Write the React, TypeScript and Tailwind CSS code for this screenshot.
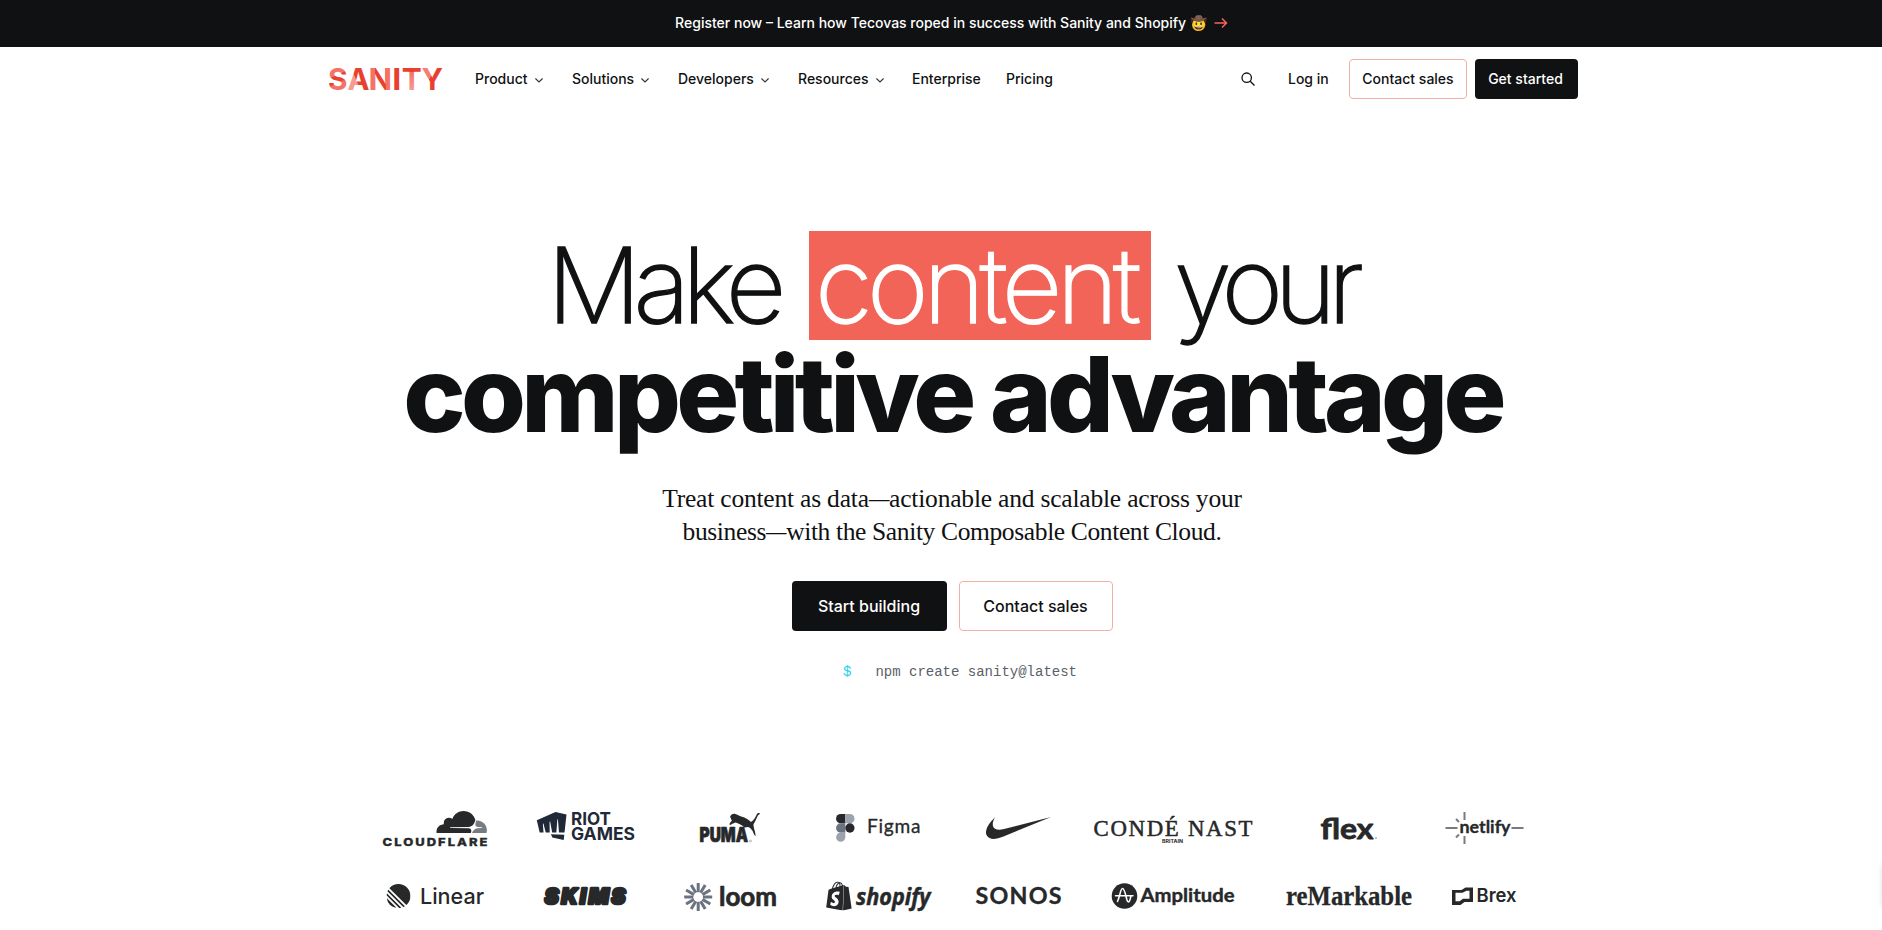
import React from "react";
import { SiShopify, SiLinear } from "react-icons/si";

const INK = "#26282a";

type WordProps = {
  x: number;
  y: number;
  size: number;
  width: number;
  weight?: number;
  font?: string;
  italic?: boolean;
  fill?: string;
  stroke?: number;
  /** Horizontal glyph scale; the rest of the width is made up by letter spacing. */
  sx?: number;
  children: string;
};

function Word({ x, y, size, width, weight = 700, font = "Inter", italic, fill = INK, stroke, sx, children }: WordProps) {
  return (
    <text
      transform={`translate(${x} ${y}) scale(${sx ?? 1} 1)`}
      fontSize={size}
      fontWeight={weight}
      fontFamily={`"${font}", sans-serif`}
      fontStyle={italic ? "italic" : "normal"}
      textLength={width / (sx ?? 1)}
      lengthAdjust={sx ? "spacing" : "spacingAndGlyphs"}
      fill={fill}
      stroke={stroke ? fill : undefined}
      strokeWidth={stroke}
      strokeLinejoin="round"
    >
      {children}
    </text>
  );
}

function Logo({ w, label, children }: { w: number; label: string; children: React.ReactNode }) {
  return (
    <div className="flex h-[69px] items-center justify-center">
      <svg width={w} height={46} viewBox={`0 0 ${w} 46`} className="shrink-0 overflow-visible" role="img" aria-label={label}>
        {children}
      </svg>
    </div>
  );
}

const sanityLetters = [
  { ch: "S", x: -1, w: 19.5, fill: "url(#sS)" },
  { ch: "A", x: 18.5, w: 22, fill: "url(#sA)" },
  { ch: "N", x: 39.6, w: 23.6, fill: "url(#sN)" },
  { ch: "I", x: 63.3, w: 9, fill: "#e8402f" },
  { ch: "T", x: 72.8, w: 20, fill: "url(#sT)" },
  { ch: "Y", x: 92.5, w: 21.5, fill: "url(#sY)" },
];

function SanityLogo() {
  return (
    <svg width="114" height="24" viewBox="0 0 114 24" className="shrink-0 overflow-visible" role="img" aria-label="Sanity">
      <defs>
        <linearGradient id="sS" gradientUnits="userSpaceOnUse" x1="3" y1="1" x2="13" y2="23">
          <stop offset="0.34" stopColor="#f37368" />
          <stop offset="0.36" stopColor="#e8402f" />
          <stop offset="0.62" stopColor="#e8402f" />
          <stop offset="0.7" stopColor="#f37368" />
        </linearGradient>
        <linearGradient id="sA" gradientUnits="userSpaceOnUse" x1="25" y1="14" x2="31" y2="11.5">
          <stop offset="0.3" stopColor="#f79a92" />
          <stop offset="0.45" stopColor="#e8402f" />
        </linearGradient>
        <linearGradient id="sN" gradientUnits="userSpaceOnUse" x1="42" y1="0" x2="61" y2="0">
          <stop offset="0.2" stopColor="#f37368" />
          <stop offset="0.22" stopColor="#e8402f" />
          <stop offset="0.76" stopColor="#e8402f" />
          <stop offset="0.78" stopColor="#f37368" />
        </linearGradient>
        <linearGradient id="sT" gradientUnits="userSpaceOnUse" x1="0" y1="1" x2="0" y2="23">
          <stop offset="0.18" stopColor="#e8402f" />
          <stop offset="0.2" stopColor="#f37368" />
          <stop offset="1" stopColor="#f79a92" />
        </linearGradient>
        <linearGradient id="sY" gradientUnits="userSpaceOnUse" x1="98" y1="8" x2="105" y2="12">
          <stop offset="0.45" stopColor="#f37f75" />
          <stop offset="0.55" stopColor="#e8402f" />
        </linearGradient>
      </defs>
      {sanityLetters.map((l) => (
        <text key={l.ch} x={l.x} y="23" fontSize="30" fontWeight="700" fontFamily="Inter, sans-serif" textLength={l.w} lengthAdjust="spacingAndGlyphs" fill={l.fill}>
          {l.ch}
        </text>
      ))}
    </svg>
  );
}

function Chevron() {
  return (
    <svg width="8" height="5" viewBox="0 0 8 5" className="mt-[3px] ml-[7px] shrink-0" fill="none" stroke="#33373c" strokeWidth="1.1">
      <path d="M.4.5 4 4 7.6.5" />
    </svg>
  );
}

function NavItem({ label, menu, className }: { label: string; menu?: boolean; className: string }) {
  return (
    <a className={`flex items-center ${className}`}>
      <span className="whitespace-nowrap">{label}</span>
      {menu && <Chevron />}
    </a>
  );
}

function Dash() {
  return <span className="mr-[-5px] inline-block origin-left scale-x-[0.8]">—</span>;
}

function LogoWall() {
  return (
    <section className="ml-[358px] grid grid-cols-[153px_148px_142px_155px_124px_187px_164px_107px]">
      <Logo w={105} label="Cloudflare">
        <g transform="translate(54.5 -7.3) scale(2.1 2.03)">
          <path fill={INK} d="M16.509 16.845c.147-.507.09-.971-.156-1.316-.224-.316-.604-.499-1.061-.52l-8.66-.113a.156.156 0 0 1-.133-.071.18.18 0 0 1-.02-.155c.027-.084.112-.149.203-.157l8.736-.112c1.035-.049 2.16-.887 2.554-1.913l.499-1.302a.27.27 0 0 0 .014-.168c-.562-2.546-2.835-4.445-5.55-4.445-2.503 0-4.628 1.618-5.387 3.861-.493-.366-1.119-.562-1.794-.499a2.59 2.59 0 0 0-2.286 2.286c-.028.31-.007.613.063.894C1.568 13.171 0 14.775 0 16.752c0 .175.014.352.035.527.014.083.085.148.17.148h15.98c.091 0 .176-.065.204-.155z" />
          <path fill="#777b82" d="M19.266 11.281c-.077 0-.161 0-.239.011-.056 0-.105.042-.127.098l-.338 1.174c-.147.507-.091.971.155 1.317.225.316.605.498 1.062.519l1.844.113c.056 0 .105.027.133.071a.19.19 0 0 1 .021.156c-.028.084-.113.148-.204.155l-1.921.113c-1.041.048-2.158.886-2.553 1.914l-.14.358c-.029.071.021.142.098.142h6.598c.077 0 .147-.049.169-.126.112-.409.176-.837.176-1.281 0-2.602-2.125-4.727-4.734-4.727" />
        </g>
        <Word x={0.5} y={41} size={11} width={105} weight={800} sx={1.18} stroke={0.3}>CLOUDFLARE</Word>
      </Logo>
      <Logo w={99} label="Riot Games">
        <path fill="#1f2937" transform="translate(.4 7) scale(1.27 1.17)" d="m12.534 21.77-1.09-2.81 10.52.54-.451 4.5zM15.06 0 .307 6.969 2.59 17.471H5.6l-.52-7.512.461-.144 1.81 7.656h3.126l-.116-9.15.462-.144 1.582 9.294h3.31l.78-11.053.462-.144.82 11.197h4.376l1.54-15.37Z" />
        <Word x={35} y={20} size={17.8} width={40} fill="#1f2937">RIOT</Word>
        <Word x={35} y={35} size={17.8} width={64} fill="#1f2937">GAMES</Word>
      </Logo>
      <Logo w={60} label="Puma">
        <Word x={-0.5} y={37.3} size={19.8} width={48.5} weight={900} stroke={0.7}>PUMA</Word>
        <path fill={INK} d="M30 12c1-2.500 2.500-3.500 4.500-3.300 2 .3 4.500 2 7.500 3 3 1 6.500 2.500 9 5.300 3-1.600 4.500-5 6-8 .6-1.300 2-1.300 2.900-.6-.2 1.200-1.400 1-2 2-1.700 3.400-3 6.800-4.400 8.800 0 2.700.8 5 1.500 7.500l.7 4.300c-1.700-.7-2-2.500-2.700-4.300-1-2-2.700-3.700-4.700-4.600l-4 .3c-1.200-1.400-3-2.600-5-3.400-1.600-.7-2.600-1.400-4.300-1.600-1 1.300-3.400.7-4 2.600l-1.600-.5c.3-1.500 1.200-2.600 2.700-3.700-1.400-1-.6-2.600-2.100-3.800z" />
        <circle cx="50.500" cy="36" r="1" fill="none" stroke="#8b8f94" strokeWidth=".6" />
      </Logo>
      <Logo w={85} label="Figma">
        <path fill={INK} d="M9.300 9H4.700a4.600 4.600 0 0 0 0 9.300h4.600z" />
        <path fill="#9ca3af" d="M9.300 9h4.600a4.600 4.600 0 0 1 0 9.300H9.300zM4.700 27.600h4.600v4.600a4.600 4.600 0 1 1-4.600-4.600z" />
        <path fill="#6b7280" d="M9.300 18.300H4.700a4.600 4.600 0 0 0 0 9.300h4.600z" />
        <circle cx="13.900" cy="23" r="4.650" fill={INK} />
        <Word x={31} y={28.3} size={19.5} width={53.5} weight={400} font="Lato" sx={0.98} stroke={0.3}>Figma</Word>
      </Logo>
      <Logo w={65} label="Nike">
        <path fill={INK} transform="translate(0 -8.500) scale(2.710 2.620)" d="M24 7.800 6.442 15.276c-1.456.616-2.679.925-3.668.925-1.120 0-1.933-.392-2.437-1.177-.317-.504-.41-1.143-.28-1.918.13-.775.476-1.600 1.036-2.478.467-.71 1.232-1.643 2.297-2.800a6.122 6.122 0 0 0-.784 1.848c-.28 1.195-.028 2.072.756 2.632.373.261.886.392 1.540.392.522 0 1.110-.084 1.764-.252z" />
      </Logo>
      <Logo w={159} label="Condé Nast Britain">
        <Word x={-0.5} y={31} size={22.8} width={159} weight={400} font="Liberation Serif" sx={1} stroke={0.5}>CONDÉ NAST</Word>
        <Word x={68} y={38} size={4.2} width={21} weight={700}>BRITAIN</Word>
      </Logo>
      <Logo w={56} label="Flex">
        <Word x={-0.5} y={33.8} size={29} width={53} weight={700} font="Lato" stroke={0.8}>flex</Word>
        <circle cx="55" cy="33" r=".9" fill="#9ca3af" />
      </Logo>
      <Logo w={78} label="Netlify">
        <path fill="none" stroke="#777b82" strokeWidth="2" d="M-.5 23h12M65.500 23h12M18.500 7v8M18.500 31v8M10 14l3 3M10 32.500l3-3" />
        <Word x={13.5} y={27.8} size={16.5} width={51} weight={700} font="Lato" stroke={0.3}>netlify</Word>
      </Logo>

      <Logo w={97} label="Linear">
        <SiLinear x={0.5} y={10} size={24} color={INK} />
        <Word x={34} y={30.3} size={22} width={64} weight={500}>Linear</Word>
      </Logo>
      <Logo w={84} label="Skims">
        <Word x={1.5} y={29.6} size={21} width={81} weight={900} italic sx={1.02} stroke={2.6}>SKIMS</Word>
      </Logo>
      <Logo w={93} label="Loom">
        <g stroke="#6b7280" strokeWidth="3">
          {[0, 30, 60, 90, 120, 150, 180, 210, 240, 270, 300, 330].map((a) => (
            <path key={a} d="M14.200 18.200V9" transform={`rotate(${a} 14.200 23)`} />
          ))}
        </g>
        <Word x={35} y={31.5} size={26.5} width={58} weight={700} font="Lato" stroke={0.7}>loom</Word>
      </Logo>
      <Logo w={105} label="Shopify">
        <SiShopify x={-1.5} y={7.5} size={29} color={INK} />
        <Word x={30} y={30.5} size={23.5} width={74.5} weight={700} font="Open Sans" italic stroke={0.5}>shopify</Word>
      </Logo>
      <Logo w={85} label="Sonos">
        <Word x={-0.5} y={30.3} size={22} width={86} weight={700} font="Lato" sx={1.06} stroke={0.3}>SONOS</Word>
      </Logo>
      <Logo w={123} label="Amplitude">
        <circle cx="12.500" cy="22" r="12.800" fill={INK} />
        <path fill="none" stroke="#fff" strokeWidth="1.500" strokeLinecap="round" d="M3.500 21.800h17.500M5.500 27.500C8 22 8.500 14.500 10.500 14.500s3 6 4.300 11c.7 2.600 2 3.500 3 .8.5-1.300.8-2.800 1.200-4.300" />
        <Word x={28.5} y={28.3} size={18.5} width={94} weight={700} font="Lato" stroke={0.4}>Amplitude</Word>
      </Logo>
      <Logo w={126} label="reMarkable">
        <Word x={0} y={31} size={27} width={126} weight={700} font="Liberation Serif" stroke={0.3}>reMarkable</Word>
      </Logo>
      <Logo w={65} label="Brex">
        <path fill={INK} fillRule="evenodd" d="M0 16h9.500l4-2.500H21V28h-8.500L8.500 31H0zM3.500 18.800v8.500h4l3.500-2.600h6.500v-8h-3l-4 2.100z" />
        <Word x={24.5} y={28} size={19} width={40} weight={600}>Brex</Word>
      </Logo>
    </section>
  );
}

export default function App() {
  return (
    <div className="relative flex h-[930px] w-full flex-col overflow-hidden bg-white font-['Inter',sans-serif] text-[#101112]">
      <div className="flex h-[47px] shrink-0 items-center justify-center bg-[#101112] pb-0.5 pl-[21px] text-sm font-medium text-white">
        <span className="whitespace-pre">Register now – Learn how Tecovas roped in success with Sanity and Shopify 🤠</span>
        <svg width="14" height="12" viewBox="0 0 14 12" className="ml-[7px]" fill="none" stroke="#f36458" strokeWidth="1.5">
          <path d="M.5 6h12M8 1.500 12.500 6 8 10.500" />
        </svg>
      </div>

      <header className="flex h-16 shrink-0 items-center pl-[329px] text-sm font-medium">
        <SanityLogo />
        <nav className="ml-8 flex items-center">
          <NavItem label="Product" menu className="w-[97px]" />
          <NavItem label="Solutions" menu className="w-[106px]" />
          <NavItem label="Developers" menu className="w-[120px]" />
          <NavItem label="Resources" menu className="w-[114px]" />
          <NavItem label="Enterprise" className="w-[94px]" />
          <NavItem label="Pricing" className="w-[235px]" />
        </nav>
        <svg width="14" height="14" viewBox="0 0 14 14" fill="none" stroke="#101112" strokeWidth="1.3">
          <circle cx="5.700" cy="5.700" r="4.700" />
          <path d="m9.200 9.200 4.300 4.300" />
        </svg>
        <a className="ml-[33px] w-[61px] whitespace-nowrap">Log in</a>
        <a className="flex h-10 w-[118px] items-center justify-center rounded border border-[#f2b0a9]">Contact sales</a>
        <a className="ml-2 flex h-10 w-[103px] items-center justify-center rounded bg-[#101112] pr-0.5 text-white">Get started</a>
      </header>

      <main className="flex shrink-0 flex-col items-center pt-[120px] pl-[22px]">
        <h1 className="text-[105px] leading-[107px] whitespace-nowrap">
          <span className="mx-auto flex h-[109px] w-[810px] font-extralight [-webkit-text-stroke:1.4px_currentColor]">
            <span className="w-[262px] shrink-0 tracking-[-0.073em]">Make</span>
            <span className="w-[342px] shrink-0 bg-[#f36458] pl-[6px] tracking-[-0.051em] text-white">content</span>
            <span className="ml-[23px] tracking-[-0.079em]">your</span>
          </span>
          <span className="block h-[109px] pl-px text-center font-extrabold tracking-[-0.045em]">competitive advantage</span>
        </h1>
        <p className="mt-[33px] mb-px text-center font-['Liberation_Serif',serif] text-[25.5px] leading-[33px] tracking-[-0.2px] whitespace-nowrap">
          Treat content as data
          <Dash />
          actionable and scalable across your
          <br />
          <span className="tracking-[-0.37px]">
            business
            <Dash />
            with the Sanity Composable Content Cloud.
          </span>
        </p>
        <div className="mt-8 flex gap-3 text-base font-medium">
          <a className="flex h-[50px] w-[155px] items-center justify-center rounded bg-[#101112] text-white">Start building</a>
          <a className="flex h-[50px] w-[154px] items-center justify-center rounded border border-[#f2b0a9]">Contact sales</a>
        </div>
        <div className="mt-[31px] flex gap-6 pl-4 font-['Liberation_Mono',monospace] text-sm leading-5 text-[#5a6068]">
          <span className="text-[#22d3ee]">$</span>
          <span>npm create sanity@latest</span>
        </div>
      </main>
      <div className="mt-[111px] shrink-0">
        <LogoWall />
      </div>
      <div className="absolute top-[862px] left-[1883px] h-12 w-12 rounded-lg bg-white shadow-[0_0_6px_rgba(0,0,0,0.18)]" />
    </div>
  );
}
